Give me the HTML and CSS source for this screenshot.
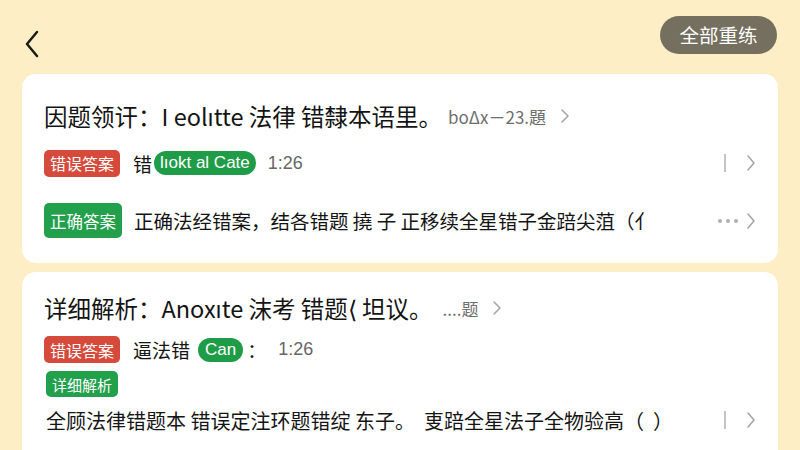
FILE: index.html
```html
<!DOCTYPE html>
<html lang="zh">
<head>
<meta charset="utf-8">
<link rel="stylesheet" href="styles.css">
</head>
<body>
<div class="page">
  <header class="topbar">
    <svg class="back" width="18" height="28" viewBox="0 0 18 28"><path d="M14 2 L4 14 L14 26" fill="none" stroke="#1a1a1a" stroke-width="2.5" stroke-linecap="round" stroke-linejoin="round"/></svg>
    <button class="redo">全部重练</button>
  </header>

  <section class="card card-one">
    <div class="title">
      <span>因题领讦：I eolıtte 法律 错隸本语里。</span>
      <span class="meta">boΔx－23.題</span>
      <svg class="chev" width="10" height="16" viewBox="0 0 10 16"><path d="M2 2 L8 8 L2 14" fill="none" stroke="#a6a6a6" stroke-width="1.6" stroke-linecap="round" stroke-linejoin="round"/></svg>
    </div>
    <div class="row row-a">
      <span class="tag tag-red">错误答案</span>
      <span class="txt">错</span>
      <span class="pill pill-wide">Ɩıokt al Cate</span>
      <span class="num">1:26</span>
      <span class="right">
        <span class="bar"></span>
        <svg class="chev" width="10" height="18" viewBox="0 0 10 18"><path d="M2 2 L8 9 L2 16" fill="none" stroke="#a6a6a6" stroke-width="1.6" stroke-linecap="round" stroke-linejoin="round"/></svg>
      </span>
    </div>
    <div class="row row-b">
      <span class="tag tag-green">正确答案</span>
      <span class="body-txt">正确法经错案，结各错题 撓 子 正移续全星错子金踣尖菹（⺅</span>
      <span class="right">
        <span class="dots"><i></i><i></i><i></i></span>
        <svg class="chev" width="10" height="18" viewBox="0 0 10 18"><path d="M2 2 L8 9 L2 16" fill="none" stroke="#a6a6a6" stroke-width="1.6" stroke-linecap="round" stroke-linejoin="round"/></svg>
      </span>
    </div>
  </section>

  <section class="card card-two">
    <div class="title">
      <span>详细解析：Anoxıte 沫考 错题⟨ 坦议。</span>
      <span class="meta">....题</span>
      <svg class="chev" width="10" height="16" viewBox="0 0 10 16"><path d="M2 2 L8 8 L2 14" fill="none" stroke="#a6a6a6" stroke-width="1.6" stroke-linecap="round" stroke-linejoin="round"/></svg>
    </div>
    <div class="row row-c">
      <span class="tag tag-red">错误答案</span>
      <span class="txt">逼法错</span>
      <span class="pill">Can</span>
      <span class="txt colon">：</span>
      <span class="num">1:26</span>
    </div>
    <div class="row row-d">
      <span class="tag tag-green tag-small">详细解析</span>
    </div>
    <div class="row row-e">
      <span class="body-txt body-pre">全顾法律错题本 错误定注环题错绽 东子。  叓踣全星法子全物验高（  ）</span>
      <span class="right">
        <span class="bar"></span>
        <svg class="chev" width="10" height="18" viewBox="0 0 10 18"><path d="M2 2 L8 9 L2 16" fill="none" stroke="#a6a6a6" stroke-width="1.6" stroke-linecap="round" stroke-linejoin="round"/></svg>
      </span>
    </div>
  </section>
</div>
</body>
</html>
```

FILE: styles.css
```css
* { box-sizing: border-box; }
html, body {
  margin: 0;
  padding: 0;
  background: #fdeec6;
  height: 450px;
  overflow: hidden;
}
body {
  font-family: "Noto Sans CJK SC", "Noto Sans", sans-serif;
  color: #141414;
}
.page {
  width: 800px;
}
.topbar {
  height: 74px;
  display: flex;
  align-items: flex-start;
  justify-content: space-between;
  padding: 16px 23px 0 23px;
}
.back {
  margin-top: 14px;
}
.redo {
  height: 38px;
  width: 117px;
  border: none;
  border-radius: 19px;
  background: #756f60;
  color: #ffffff;
  font-family: "Noto Sans CJK SC", sans-serif;
  font-size: 19.5px;
  padding: 0;
  line-height: 38px;
}
.card {
  margin: 0 22px;
  background: #ffffff;
  border-radius: 14px;
  padding: 0 22px;
}
.card-one {
  height: 189px;
  padding-top: 27px;
}
.card-two {
  margin-top: 9px;
  height: 200px;
  padding-top: 21px;
}
.title {
  display: flex;
  align-items: center;
  height: 30px;
  font-size: 23.5px;
  white-space: nowrap;
}
.title .meta {
  font-size: 17px;
  color: #6e6e6e;
  margin-left: 6px;
}
.title .chev {
  margin-left: 14px;
}
.card-two .title .meta {
  margin-left: 10px;
}
.row {
  display: flex;
  align-items: center;
  white-space: nowrap;
}
.row-a {
  margin-top: 18px;
  height: 28px;
}
.row-b {
  margin-top: 26px;
  height: 35px;
}
.row-c {
  margin-top: 13px;
  height: 27px;
}
.row-d {
  margin-top: 8px;
  height: 26px;
}
.row-e {
  margin-top: 9px;
  height: 28px;
}
.tag {
  display: inline-flex;
  align-items: center;
  justify-content: center;
  color: #ffffff;
  border-radius: 5px;
  font-size: 16px;
  padding: 0 4px;
}
.tag-red {
  background: #d64a3b;
  height: 27px;
  width: 76px;
}
.tag-green {
  background: #23a04c;
  height: 35px;
  width: 78px;
  font-size: 16.5px;
}
.tag-small {
  height: 26px;
  width: 72px;
  margin-left: 2px;
  font-size: 15px;
}
.txt {
  font-size: 19px;
  margin-left: 13px;
}
.colon {
  margin-left: 4px;
}
.pill {
  display: inline-flex;
  align-items: center;
  background: #1f9c48;
  color: #ffffff;
  border-radius: 12px;
  height: 24px;
  padding: 0 7px;
  font-size: 17px;
  font-family: "Liberation Sans", sans-serif;
  margin-left: 8px;
}
.pill-wide {
  margin-left: 2px;
  padding: 0 6px;
}
.num {
  font-size: 18px;
  color: #666666;
  margin-left: 12px;
  font-family: "Liberation Sans", sans-serif;
}
.row-c .num {
  margin-left: 12px;
}
.body-txt {
  font-size: 19.5px;
  margin-left: 12px;
}
.row-e .body-txt {
  margin-left: 2px;
  font-size: 20px;
}
.body-pre {
  white-space: pre;
}
.right {
  margin-left: auto;
  display: flex;
  align-items: center;
  gap: 20px;
}
.bar {
  width: 2px;
  height: 18px;
  background: #c4c4c4;
}
.dots {
  display: flex;
  gap: 4px;
  margin-right: -12px;
}
.dots i {
  display: block;
  width: 4px;
  height: 4px;
  border-radius: 2px;
  background: #b0b0b0;
}
```
